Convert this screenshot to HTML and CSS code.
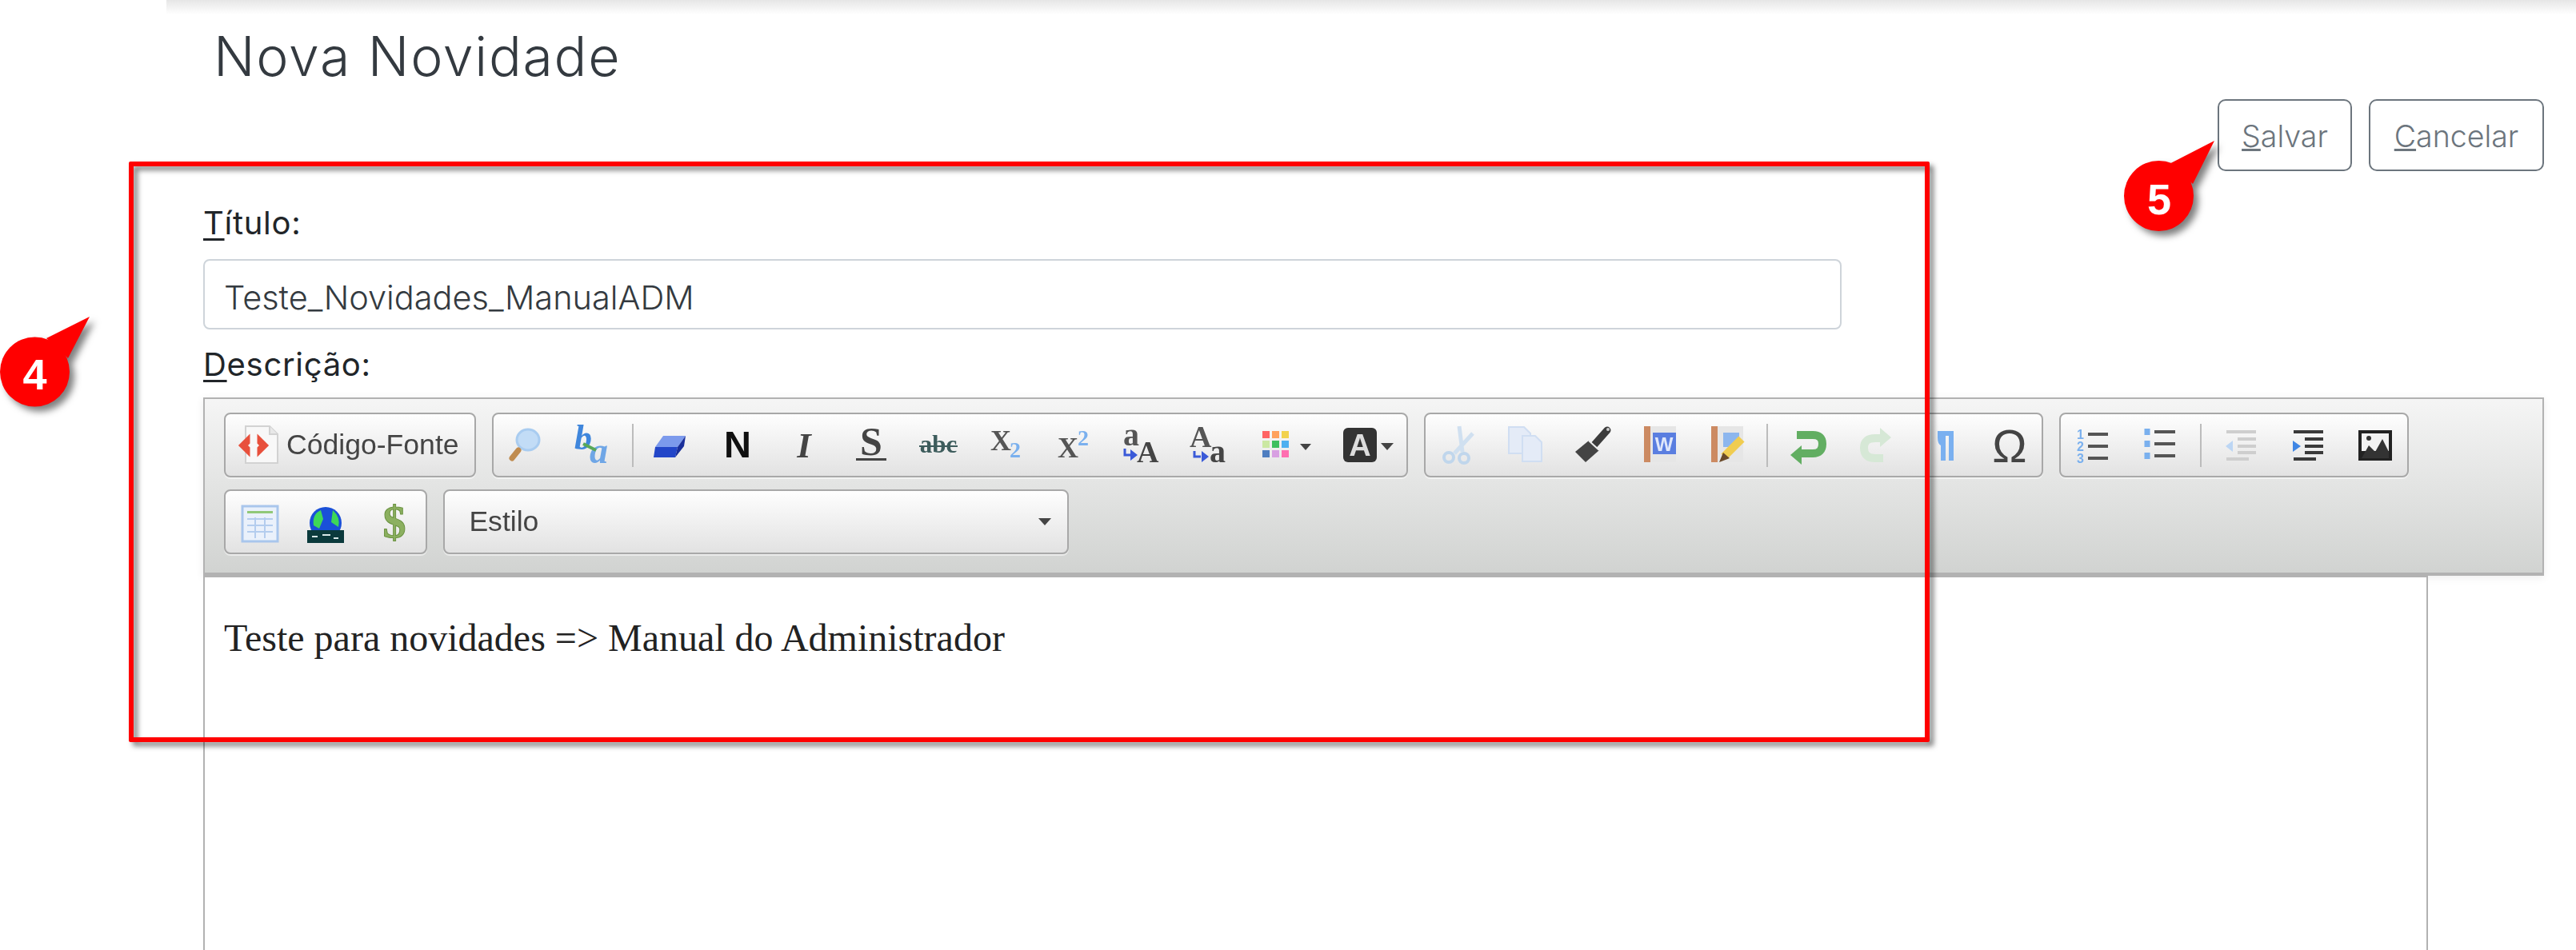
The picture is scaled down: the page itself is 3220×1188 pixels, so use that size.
FILE: index.html
```html
<!DOCTYPE html>
<html>

<head>
  <meta charset="utf-8">
  <title>Nova Novidade</title>
  <link rel="stylesheet" href="styles.css">
</head>

<body>
  <div class="topbar"></div>

  <main class="page">
    <h1 class="page-title">Nova Novidade</h1>

    <div class="actions">
      <button class="btn btn-save"><u>S</u>alvar</button>
      <button class="btn btn-cancel"><u>C</u>ancelar</button>
    </div>

    <label class="field-label field-titulo" for="titulo"><u>T</u>ítulo:</label>
    <input class="field-input" id="titulo" type="text" value="Teste_Novidades_ManualADM">
    <label class="field-label field-descricao"><u>D</u>escrição:</label>

    <div class="toolbar">
      <div class="tb-group tb-source">
        <svg class="ico" viewBox="0 0 56 56">
          <path d="M15 4H45L55 14V50H15Z" fill="#f8f8f8" stroke="#d2d2d2" stroke-width="2"/>
          <path d="M45 4V14H55" fill="#e8e8e8" stroke="#d2d2d2" stroke-width="2"/>
          <path d="M8 28L19 17V25L16 28L19 31V39ZM42 28L31 17V25L34 28L31 31V39Z" fill="#e8503c" stroke="#e8503c" stroke-width="3"/>
        </svg>
        <span class="tb-text">Código-Fonte</span>
      </div>

      <div class="tb-group">
        <span class="tb-btn"><svg class="ico" viewBox="0 0 56 56">
          <ellipse cx="31" cy="21" rx="14" ry="13" fill="#c2dcf6" stroke="#a9ccf0" stroke-width="3"/>
          <path d="M19 34L11 44" stroke="#c08c50" stroke-width="7" stroke-linecap="round"/>
        </svg></span>
        <span class="tb-btn"><svg class="ico" viewBox="0 0 56 56">
          <text class="svg-serif-b svg-italic" x="5" y="33" font-size="44" fill="#3f86dc">b</text>
          <text class="svg-serif-b svg-italic" x="24" y="50" font-size="46" fill="#6fa6e6">a</text>
          <path d="M16 26L32 34" stroke="#58a858" stroke-width="4"/>
        </svg></span>
        <i class="tb-sep"></i>
        <span class="tb-btn"><svg class="ico" viewBox="0 0 56 56">
          <path d="M20 16H48L38 30H10Z" fill="#7c9aec"/>
          <path d="M10 30H38L35 43H8Z" fill="#2346c8"/>
          <path d="M48 16L46 29L35 43L38 30Z" fill="#1a2f9a"/>
        </svg></span>
        <span class="tb-btn"><svg class="ico" viewBox="0 0 56 56"><text class="svg-sans-b svg-mid" x="29" y="43" font-size="47" fill="#111">N</text></svg></span>
        <span class="tb-btn"><svg class="ico" viewBox="0 0 56 56"><text class="svg-serif-b svg-italic svg-mid" x="28" y="43" font-size="45" fill="#444">I</text></svg></span>
        <span class="tb-btn"><svg class="ico" viewBox="0 0 56 56">
          <text class="svg-serif-b svg-mid" x="28" y="40" font-size="50" fill="#444">S</text>
          <rect x="9" y="44" width="38" height="3" fill="#444"/>
        </svg></span>
        <span class="tb-btn"><svg class="ico" viewBox="0 0 56 56">
          <text class="svg-serif-b svg-mid" x="28" y="37" font-size="31" fill="#3d5c5c">abc</text>
          <rect x="4" y="28" width="48" height="2" fill="#3d5c5c"/>
        </svg></span>
        <span class="tb-btn"><svg class="ico" viewBox="0 0 56 56">
          <text class="svg-serif-b" x="8" y="34" font-size="36" fill="#555">X</text>
          <text class="svg-serif-b" x="32" y="43" font-size="28" fill="#7ab0ee">2</text>
        </svg></span>
        <span class="tb-btn"><svg class="ico" viewBox="0 0 56 56">
          <text class="svg-serif-b" x="8" y="43" font-size="36" fill="#555">X</text>
          <text class="svg-serif-b" x="33" y="28" font-size="28" fill="#7ab0ee">2</text>
        </svg></span>
        <span class="tb-btn"><svg class="ico" viewBox="0 0 56 56">
          <text class="svg-serif-b" x="6" y="28" font-size="40" fill="#555">a</text>
          <text class="svg-serif-b" x="23" y="49" font-size="38" fill="#444">A</text>
          <path d="M8 32V40H16" fill="none" stroke="#3a5ad8" stroke-width="3"/>
          <path d="M24 40L15 33V47Z" fill="#3a5ad8"/>
        </svg></span>
        <span class="tb-btn"><svg class="ico" viewBox="0 0 56 56">
          <text class="svg-serif-b" x="5" y="30" font-size="38" fill="#555">A</text>
          <text class="svg-serif-b" x="30" y="49" font-size="40" fill="#444">a</text>
          <path d="M11 35V42H19" fill="none" stroke="#3a5ad8" stroke-width="3"/>
          <path d="M29 42L20 35V49Z" fill="#3a5ad8"/>
        </svg></span>
        <span class="tb-btn tb-split"><svg class="ico ico-split" viewBox="0 0 100 56">
          <rect x="24" y="10" width="9" height="9" fill="#ff6464"/>
          <rect x="36" y="10" width="9" height="9" fill="#ffa25e"/>
          <rect x="48" y="10" width="9" height="9" fill="#f2d24e"/>
          <rect x="24" y="22" width="9" height="9" fill="#cbe8a2"/>
          <rect x="36" y="22" width="9" height="9" fill="#3ec060"/>
          <rect x="48" y="22" width="9" height="9" fill="#4eb0f0"/>
          <rect x="24" y="34" width="9" height="9" fill="#4f7ec0"/>
          <rect x="36" y="34" width="9" height="9" fill="#d8a0e2"/>
          <rect x="48" y="34" width="9" height="9" fill="#ff6eb0"/>
          <path d="M71 26H85L78 34Z" fill="#444"/>
        </svg></span>
        <span class="tb-btn tb-split"><svg class="ico ico-split" viewBox="0 0 100 56">
          <rect x="21" y="6" width="42" height="43" rx="6" fill="#333"/>
          <text class="svg-sans-b svg-mid" x="42" y="41" font-size="38" fill="#ddd">A</text>
          <path d="M68 25H84L76 34Z" fill="#444"/>
        </svg></span>
      </div>

      <div class="tb-group">
        <span class="tb-btn"><svg class="ico" viewBox="0 0 56 56">
          <path d="M30 4L34 36M47 13L24 38" stroke="#d0e0f0" stroke-width="5" fill="none"/>
          <circle cx="17" cy="43" r="6" fill="none" stroke="#c0d6ec" stroke-width="4"/>
          <circle cx="36" cy="44" r="6" fill="none" stroke="#c0d6ec" stroke-width="4"/>
        </svg></span>
        <span class="tb-btn"><svg class="ico" viewBox="0 0 56 56">
          <path d="M7 5H26L34 13V38H7Z" fill="#e4ebf7" stroke="#d0def2" stroke-width="2"/>
          <path d="M24 16H40L48 24V48H24Z" fill="#e4ebf7" stroke="#d0def2" stroke-width="2"/>
        </svg></span>
        <span class="tb-btn"><svg class="ico" viewBox="0 0 56 56">
          <path d="M46 9L30 27" stroke="#3c3c3c" stroke-width="9" stroke-linecap="round"/>
          <path d="M6 36L23 22L36 34L19 49Z" fill="#444"/>
          <path d="M23 22L36 34" stroke="#eee" stroke-width="2"/>
          <circle cx="47" cy="8" r="2" fill="#ccc"/>
        </svg></span>
        <span class="tb-btn"><svg class="ico" viewBox="0 0 56 56">
          <rect x="8" y="4" width="40" height="45" fill="#e6e6e6"/>
          <rect x="8" y="4" width="8" height="45" fill="#cc8a62"/>
          <rect x="19" y="12" width="29" height="27" fill="#5a7ee0"/>
          <text class="svg-sans-b svg-mid" x="33" y="35" font-size="24" fill="#dfe7fb">W</text>
        </svg></span>
        <span class="tb-btn"><svg class="ico" viewBox="0 0 56 56">
          <rect x="8" y="4" width="40" height="45" fill="#e6e6e6"/>
          <rect x="8" y="4" width="8" height="45" fill="#cc8a62"/>
          <rect x="23" y="12" width="20" height="18" fill="#8cb6ee"/>
          <path d="M46 20L24 42" stroke="#f0cc50" stroke-width="10"/>
          <path d="M18 49L23 37L31 44Z" fill="#6a4a2a"/>
        </svg></span>
        <i class="tb-sep tb-sep-wide"></i>
        <span class="tb-btn"><svg class="ico" viewBox="0 0 56 56">
          <path d="M14 15H34Q46 15 46 26Q46 38 34 38H20" fill="none" stroke="#62ae62" stroke-width="10"/>
          <path d="M6 40L20 28V52Z" fill="#62ae62"/>
        </svg></span>
        <span class="tb-btn"><svg class="ico" viewBox="0 0 56 56">
          <path d="M38 44H28Q14 44 14 31Q14 19 28 19H38" fill="none" stroke="#d6e8d6" stroke-width="10"/>
          <path d="M48 18L34 6V30Z" fill="#d6e8d6"/>
        </svg></span>
        <span class="tb-btn"><svg class="ico" viewBox="0 0 56 56">
          <path d="M22 10H42V47H36V16H32V47H26V28Q22 26 22 18Z" fill="#7ab0f0"/>
        </svg></span>
        <span class="tb-btn"><svg class="ico" viewBox="0 0 56 56"><text class="svg-sans svg-mid" x="28" y="49" font-size="58" fill="#444">Ω</text></svg></span>
      </div>

      <div class="tb-group">
        <span class="tb-btn"><svg class="ico" viewBox="0 0 56 56">
          <text class="svg-sans-b" x="8" y="20" font-size="16" fill="#7ab0ee">1</text>
          <text class="svg-sans-b" x="8" y="35" font-size="16" fill="#7ab0ee">2</text>
          <text class="svg-sans-b" x="8" y="50" font-size="16" fill="#7ab0ee">3</text>
          <path d="M22 14H47M22 29H47M22 44H47" stroke="#555" stroke-width="4"/>
        </svg></span>
        <span class="tb-btn"><svg class="ico" viewBox="0 0 56 56">
          <path d="M12 7V15M12 22V30M12 37V45" stroke="#7ab0ee" stroke-width="7"/>
          <path d="M21 11H47M21 26H47M21 41H47" stroke="#555" stroke-width="4"/>
        </svg></span>
        <i class="tb-sep tb-sep-wide"></i>
        <span class="tb-btn"><svg class="ico" viewBox="0 0 56 56">
          <path d="M10 11H47M24 20H47M24 29H47M24 37H47M10 45H38" stroke="#cecece" stroke-width="4"/>
          <path d="M9 29L18 22V36Z" fill="#bcd6f4"/>
        </svg></span>
        <span class="tb-btn"><svg class="ico" viewBox="0 0 56 56">
          <path d="M10 11H47M24 20H47M24 29H47M24 37H47M10 45H38" stroke="#3a3a3a" stroke-width="4"/>
          <path d="M19 29L9 22V36Z" fill="#3f86e4"/>
        </svg></span>
        <span class="tb-btn"><svg class="ico" viewBox="0 0 56 56">
          <rect x="7" y="9" width="42" height="38" fill="#222"/>
          <rect x="11" y="13" width="34" height="22" fill="#f2f2f2"/>
          <path d="M11 44L20 28L28 36L37 20L45 36V44Z" fill="#333"/>
          <circle cx="20" cy="19" r="3" fill="#333"/>
        </svg></span>
      </div>

      <div class="tb-group tb-group-tight">
        <span class="tb-btn"><svg class="ico" viewBox="0 0 56 56">
          <rect x="8" y="8" width="44" height="44" fill="#eaf1fb" stroke="#a9c6ec" stroke-width="3"/>
          <rect x="14" y="14" width="32" height="3" fill="#90c878"/>
          <path d="M14 24H46M14 32H46M14 40H46M24 22V48M36 22V48" stroke="#b4cdee" stroke-width="2"/>
        </svg></span>
        <span class="tb-btn"><svg class="ico" viewBox="0 0 56 56">
          <ellipse cx="28" cy="29" rx="20" ry="20" fill="#1a50d8"/>
          <path d="M13 32Q11 18 22 13L25 24L20 36ZM37 13Q47 22 44 34L35 28Z" fill="#3ed858"/>
          <rect x="5" y="38" width="46" height="16" fill="#0b3a3c"/>
          <path d="M11 46H18M24 44H34M38 48H44" stroke="#d8e8e8" stroke-width="2"/>
        </svg></span>
        <span class="tb-btn"><svg class="ico" viewBox="0 0 56 56"><text class="svg-serif-b svg-mid" x="30" y="47" font-size="58" fill="#8cb060" stroke="#6a9240" stroke-width="1">$</text></svg></span>
      </div>

      <div class="tb-group tb-select">
        <span class="tb-text">Estilo</span>
        <svg class="select-arrow" viewBox="0 0 16 9"><path d="M0 0H16L8 9Z" fill="#444"/></svg>
      </div>
    </div>

    <div class="editor">
      <p>Teste para novidades =&gt; Manual do Administrador</p>
    </div>
  </main>

  <div class="red-frame"></div>

  <svg class="callout callout-4" viewBox="0 0 130 130">
    <circle cx="43.5" cy="75" r="43.5" fill="#f00"/>
    <path d="M58 33L112 6L85 58Z" fill="#f00"/>
    <text x="43.5" y="97" font-size="54">4</text>
  </svg>

  <svg class="callout callout-5" viewBox="0 0 130 130">
    <ellipse cx="48.5" cy="75" rx="43.5" ry="44" fill="#f00"/>
    <path d="M63.5 34L118 6L91 60Z" fill="#f00"/>
    <text x="49" y="98" font-size="54">5</text>
  </svg>
</body>

</html>
```

FILE: styles.css
```css
html, body {
  margin: 0;
  height: 1188px;
  overflow: hidden;
  background: #fff;
}

body {
  position: relative;
  font-family: "Inter", "Liberation Sans", sans-serif;
  color: #212529;
}

.topbar {
  height: 18px;
  margin-left: 208px;
  background: linear-gradient(#e6e6e6, #fff);
}

.page {
  padding-left: 254px;
  width: 2926px;
}

.page-title {
  height: 106px;
  margin: 0 0 0 13px;
  font-size: 68px;
  font-weight: 300;
  line-height: 72px;
  letter-spacing: 1.7px;
  color: #343a40;
  box-sizing: border-box;
  padding-top: 16px;
}

.actions {
  display: flex;
  justify-content: flex-end;
  gap: 21px;
  height: 90px;
}

.btn {
  height: 90px;
  box-sizing: border-box;
  background: #fff;
  border: 2px solid #6c757d;
  border-radius: 10px;
  font: 300 37.5px "Inter", sans-serif;
  color: #6c757d;
  padding: 2px 0 0;
}

.btn-save {
  width: 168px;
}

.btn-cancel {
  width: 219px;
}

.field-label {
  display: block;
  font-size: 40px;
  letter-spacing: 0.7px;
  line-height: 46px;
  color: #212529;
}

.field-label u {
  text-decoration-thickness: 3px;
  text-underline-offset: 5px;
}

.field-titulo {
  padding-top: 42px;
  height: 68px;
}

.field-descricao {
  padding-top: 21px;
  height: 64px;
}

.field-input {
  display: block;
  width: 2048px;
  height: 88px;
  box-sizing: border-box;
  border: 2px solid #ced4da;
  border-radius: 8px;
  padding: 7px 24px 0;
  font: 300 41.5px "Inter", sans-serif;
  color: #343a40;
}

.toolbar {
  display: flex;
  flex-wrap: wrap;
  align-content: flex-start;
  gap: 15px 20px;
  box-sizing: border-box;
  height: 223px;
  padding: 17px 24px 0;
  background: linear-gradient(#f5f5f5, #d1d3d1);
  border: 2px solid #b2b2b2;
  border-bottom-width: 4px;
  box-shadow: 0 2px 10px rgba(0, 0, 0, 0.08);
}

.tb-group {
  display: flex;
  align-items: center;
  gap: 4.2px;
  height: 81px;
  box-sizing: border-box;
  background: linear-gradient(#fefefe, #e2e2e2);
  border: 2px solid #a8a8a8;
  border-radius: 8px;
  box-shadow: 0 2px 0 rgba(255, 255, 255, 0.5);
}

.tb-source {
  width: 315px;
  gap: 10px;
  padding-left: 10px;
}

.tb-group-tight {
  padding: 0 1px;
}

.tb-select {
  justify-content: space-between;
  width: 782px;
  padding: 0 20px 0 30px;
}

.tb-text {
  font: 35.6px "Liberation Sans", Arial, sans-serif;
  color: #444;
  filter: blur(0.4px);
}

.tb-btn {
  display: flex;
  justify-content: center;
  width: 80px;
}

.tb-split {
  width: 100px;
}

.tb-sep {
  width: 2px;
  height: 54px;
  margin-left: 5px;
  background: #bcbcbc;
}

.tb-sep-wide {
  margin-right: 5px;
}

.ico {
  width: 56px;
  height: 56px;
  overflow: visible;
  filter: blur(0.7px);
}

.ico-split {
  width: 100px;
}

.select-arrow {
  width: 16px;
  height: 9px;
}

.svg-sans {
  font-family: "Liberation Sans", sans-serif;
}

.svg-sans-b {
  font-family: "Liberation Sans", sans-serif;
  font-weight: 700;
}

.svg-serif {
  font-family: "Liberation Serif", serif;
}

.svg-serif-b {
  font-family: "Liberation Serif", serif;
  font-weight: 700;
}

.svg-italic {
  font-style: italic;
}

.svg-mid {
  text-anchor: middle;
}

.editor {
  box-sizing: border-box;
  width: 2781px;
  height: 468px;
  border: 2px solid #b2b2b2;
  border-bottom: 0;
  background: #fff;
}

.editor p {
  margin: 0;
  padding: 48px 24px 0;
  font: 48px/56px "Liberation Serif", serif;
  color: #222;
}

/* annotations laid over the screenshot */
.red-frame {
  position: absolute;
  left: 161px;
  top: 202px;
  width: 2251px;
  height: 726px;
  box-sizing: border-box;
  border: 6px solid #f00;
  border-radius: 2px;
  filter: drop-shadow(5px 5px 3px rgba(0, 0, 0, 0.5));
}

.callout {
  position: absolute;
  width: 130px;
  height: 130px;
  overflow: visible;
  filter: drop-shadow(6px 6px 4px rgba(0, 0, 0, 0.5));
}

.callout text {
  font-family: "Liberation Sans", sans-serif;
  font-weight: 700;
  text-anchor: middle;
  fill: #fff;
}

.callout-4 {
  left: 0;
  top: 390px;
}

.callout-5 {
  left: 2650px;
  top: 170px;
}
```
